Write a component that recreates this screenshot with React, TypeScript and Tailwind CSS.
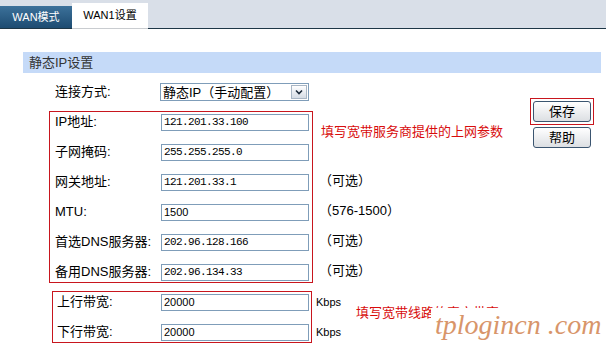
import React from 'react';

const sans = "font-['Liberation_Sans','Noto_Sans_CJK_SC',sans-serif]";

type Row = { label: string; value: string; mono?: boolean };

const ipRows: Row[] = [
  { label: 'IP地址:', value: '121.201.33.100', mono: true },
  { label: '子网掩码:', value: '255.255.255.0', mono: true },
  { label: '网关地址:', value: '121.201.33.1', mono: true },
  { label: 'MTU:', value: '1500' },
  { label: '首选DNS服务器:', value: '202.96.128.166', mono: true },
  { label: '备用DNS服务器:', value: '202.96.134.33', mono: true },
];

const bwRows: Row[] = [
  { label: '上行带宽:', value: '20000' },
  { label: '下行带宽:', value: '20000' },
];

function Field({ value, mono }: { value: string; mono?: boolean }) {
  return (
    <div className="flex h-[17px] w-[148px] items-center border border-[#7f9db9] bg-white px-[2px]">
      {mono ? (
        <span className="font-['Liberation_Mono',monospace] text-[11px] tracking-[-0.6px] text-black">{value}</span>
      ) : (
        <span className="font-['Liberation_Sans',sans-serif] text-[11px] text-black">{value}</span>
      )}
    </div>
  );
}

function Button({ children }: { children: React.ReactNode }) {
  return (
    <div className="flex h-[21px] w-[58px] items-center justify-center rounded-[3px] border border-[#3b5570] bg-gradient-to-b from-white to-[#dcdfe3] text-[13px] text-black">
      {children}
    </div>
  );
}

export default function App() {
  return (
    <div className={`relative h-[350px] w-[606px] overflow-hidden bg-white ${sans}`}>
      {/* tabs */}
      <div className="flex h-[29px] items-end border-b border-[#1d3646] bg-[#d9dfe8]">
        <div className="flex h-[22px] w-[72px] items-center justify-center bg-gradient-to-b from-[#3c719a] to-[#1d4c72] text-[11px] text-white">
          WAN模式
        </div>
        <div className="-mb-px flex h-[26px] w-[76px] items-center justify-center border-b border-[#c9ccd0] bg-white text-[11px] text-black">
          WAN1设置
        </div>
      </div>

      {/* section header */}
      <div className="ml-[23px] mt-[23px] flex h-[21px] w-[578px] items-center bg-[#c5daf8] pl-[6px] text-[13px] text-[#333]">
        静态IP设置
      </div>

      <div className="flex">
        <div className="w-[530px]">
          {/* connection type */}
          <div className="mt-[10px] flex h-[18px] items-center pl-[55px] text-[13px] text-black">
            <div className="w-[105px]">连接方式:</div>
            <div className="flex h-[18px] w-[149px] items-center justify-between border border-[#7f9db9] bg-white pl-[2px] pr-[1px]">
              <span className="text-[13px] leading-none">静态IP（手动配置）</span>
              <span className="flex h-[14px] w-[16px] items-center justify-center border border-[#a9b6c4] bg-gradient-to-b from-white to-[#d5dce5]">
                <svg width="8" height="6" viewBox="0 0 8 6">
                  <path d="M1 1.5 L4 4.5 L7 1.5" fill="none" stroke="#1b2a3a" strokeWidth="1.6" />
                </svg>
              </span>
            </div>
          </div>

          {/* ISP parameters */}
          <div className="mt-[10px] flex">
            <div className="ml-[49px] flex w-[264px] flex-col gap-[10px] border border-[#c8161e] pl-[5px] pr-[3px]">
              {ipRows.map((r) => (
                <div key={r.label} className="flex h-[20px] items-center">
                  <div className="w-[106px] text-[13px] text-black">{r.label}</div>
                  <Field value={r.value} mono={r.mono} />
                </div>
              ))}
            </div>
            <div className="ml-[6px] flex flex-col gap-[10px] text-[13px] text-black">
              <div className="h-[50px] pl-[2px] pt-[13px]">
                <div className="leading-[16px] text-[#d80c0c]">填写宽带服务商提供的上网参数</div>
              </div>
              <div className="flex h-[20px] items-center">（可选）</div>
              <div className="flex h-[20px] items-center">（576-1500）</div>
              <div className="flex h-[20px] items-center">（可选）</div>
              <div className="flex h-[20px] items-center">（可选）</div>
            </div>
          </div>

          {/* bandwidth */}
          <div className="mt-[8px] flex">
            <div className="ml-[52px] flex w-[260px] flex-col gap-[10px] border border-[#c8161e] pl-[4px] pr-[2px]">
              {bwRows.map((r) => (
                <div key={r.label} className="flex h-[20px] items-center">
                  <div className="w-[104px] text-[13px] text-black">{r.label}</div>
                  <Field value={r.value} />
                </div>
              ))}
            </div>
            <div className="ml-[4px] flex flex-col gap-[10px] pt-px">
              <div className="flex h-[20px] items-center text-[11px] text-black">Kbps</div>
              <div className="flex h-[20px] items-center text-[11px] text-black">Kbps</div>
            </div>
            <div className="ml-[15px] mt-[14px] self-start text-[13px] leading-[16px] text-[#d80c0c]">
              填写宽带线路的真实带宽
            </div>
          </div>
        </div>

        {/* buttons */}
        <div className="flex flex-col items-center pt-[25px]">
          <div className="border border-[#c8161e] p-[2px]">
            <Button>保存</Button>
          </div>
          <div className="mt-[2px]">
            <Button>帮助</Button>
          </div>
        </div>
      </div>

      {/* watermark */}
      <div className="absolute left-[431px] top-[308px] h-[42px] w-[175px] bg-white pl-[4px]">
        <span className="font-['Liberation_Serif',serif] text-[28px] italic leading-[34px] text-[#d8956a]">
          tplogincn .com
        </span>
      </div>
    </div>
  );
}
